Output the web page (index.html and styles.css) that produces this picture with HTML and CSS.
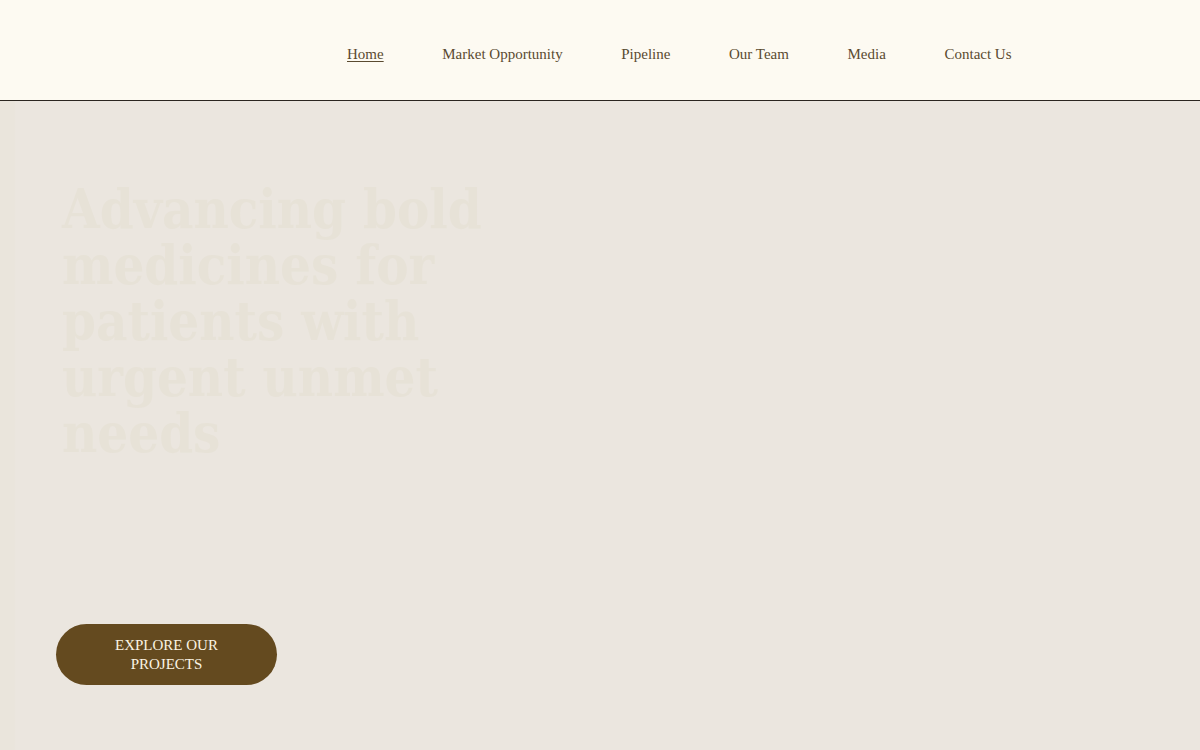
FILE: index.html
```html
<!DOCTYPE html>
<html lang="en">
<head>
<meta charset="utf-8">
<title>Home</title>
<link rel="stylesheet" href="styles.css">
</head>
<body>
<header class="site-header">
  <nav class="main-nav">
    <a class="nav-link active" href="#">Home</a>
    <a class="nav-link" href="#">Market Opportunity</a>
    <a class="nav-link" href="#">Pipeline</a>
    <a class="nav-link" href="#">Our Team</a>
    <a class="nav-link" href="#">Media</a>
    <a class="nav-link" href="#">Contact Us</a>
  </nav>
</header>
<main class="hero">
  <h1 class="hero-title">Advancing bold medicines for patients with urgent unmet needs</h1>
  <a class="cta" href="#">Explore our projects</a>
</main>
</body>
</html>
```

FILE: styles.css
```css
* { box-sizing: border-box; }
html, body { margin: 0; padding: 0; }
body {
  font-family: "Liberation Serif", "Times New Roman", serif;
  background: #ebe6df;
  height: 750px;
  overflow: hidden;
}
.site-header {
  height: 101px;
  background: #fdfaf2;
  border-bottom: 1px solid #2b2620;
  display: flex;
  align-items: center;
  padding-left: 347px;
}
.main-nav {
  display: flex;
  gap: 58.6px;
  align-items: center;
  margin-top: 8px;
}
.nav-link {
  font-size: 15px;
  color: #5a4a30;
  text-decoration: none;
}
.nav-link.active {
  text-decoration: underline;
  text-underline-offset: 2px;
}
.hero {
  height: 649px;
  display: flex;
  flex-direction: column;
  align-items: flex-start;
  padding: 80px 56px 65px 62px;
  background: linear-gradient(90deg, #eae5dc 0px, #eae5dc 14px, #ebe6df 16px, #ebe6df 100%);
}
.hero-title {
  margin: 0;
  max-width: 520px;
  font-family: "DejaVu Serif Condensed", "DejaVu Sans Condensed", "Liberation Serif", serif;
  font-weight: bold;
  font-size: 54px;
  line-height: 56px;
  color: #e7e2d7;
}
.cta {
  margin-top: auto;
  margin-left: -6px;
  width: 221px;
  height: 61px;
  padding: 0 40px;
  border-radius: 31px;
  background: #644a1f;
  color: #fbf4e4;
  font-size: 15px;
  line-height: 19px;
  text-transform: uppercase;
  text-decoration: none;
  text-align: center;
  display: flex;
  align-items: center;
  justify-content: center;
}
```
